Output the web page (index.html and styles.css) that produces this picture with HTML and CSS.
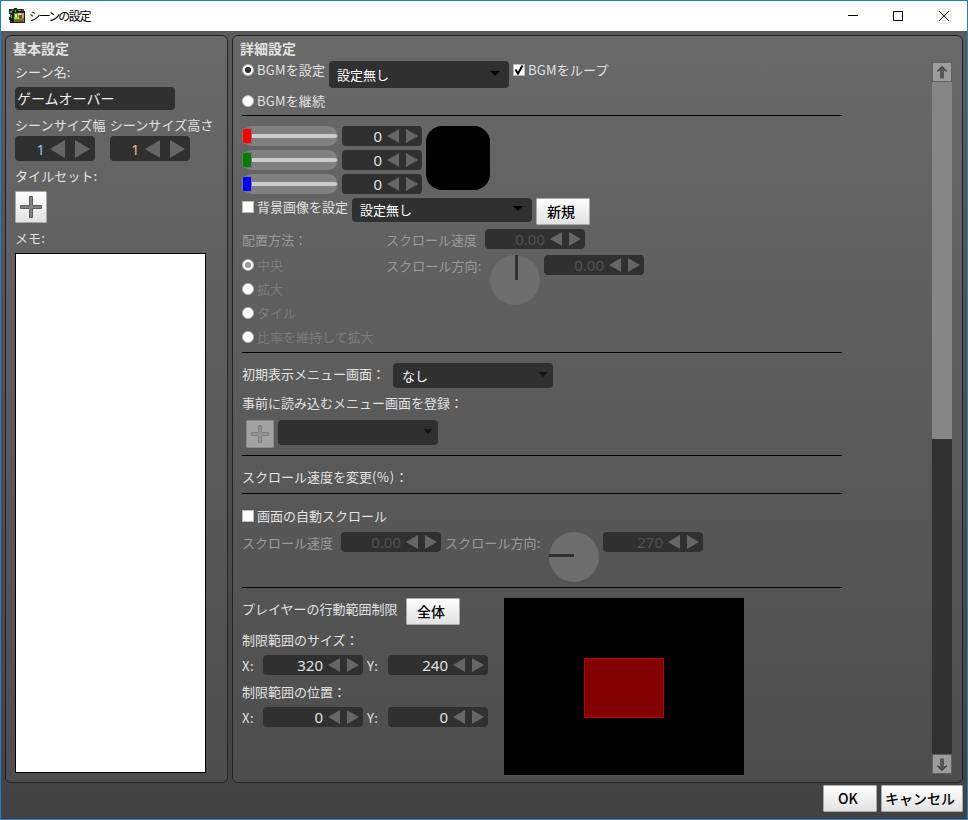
FILE: index.html
```
<!DOCTYPE html>
<html lang="ja">
<head>
    <meta charset="UTF-8">
    <title>シーンの設定</title>
    <link rel="stylesheet" href="styles.css">
</head>
<body>
    <div class="window">
        <header class="titlebar">
            <svg class="app-icon" width="16" height="16" viewBox="0 0 16 16">
                <rect x="1" y="1" width="14" height="14" fill="#3c5a34"/>
                <path d="M0 1h3v2h2V0h3v3h2V1h3v2h3v3H4v9H1v-3H0V9h2V6H0z" fill="#18251d"/>
                <path d="M1 3h2v2H1zM2 7h1v3H2zM6 2h1v2H6zM10 2h2v1h-2z" fill="#7d9a88"/>
                <rect x="4.500" y="4.500" width="11" height="10" fill="#3f9a2c" stroke="#17280f"/>
                <rect x="9" y="5" width="6" height="5" fill="#c98"/>
                <path d="M9 5h3v2H9zM6 6h2v3H6z" fill="#f0e090"/>
                <path d="M10 7h3v3h-3z" fill="#b03a20"/>
                <path d="M5 9h5v2H5z" fill="#8ce34c"/>
                <path d="M6 12h8v2H6z" fill="#a63c28"/>
            </svg>
            <span class="title">シーンの設定</span>
            <svg class="caption-buttons" width="104" height="12" viewBox="0 0 104 12">
                <path d="M0 5.500h10M45.500 1.500h9v9h-9zM91 1l10 10M101 1l-10 10" fill="none" stroke="#000"/>
            </svg>
        </header>

        <main class="panels">
            <section class="panel basic">
                <h2>基本設定</h2>
                <div class="label">シーン名:</div>
                <input type="text" class="name-input" value="ゲームオーバー">
                <div class="sizes">
                    <div class="size">
                        <div class="label">シーンサイズ幅</div>
                        <div class="spinner big blue"><span>1</span><i class="left"></i><i class="right"></i></div>
                    </div>
                    <div class="size">
                        <div class="label">シーンサイズ高さ</div>
                        <div class="spinner big orange"><span>1</span><i class="left"></i><i class="right"></i></div>
                    </div>
                </div>
                <div class="label tileset">タイルセット:</div>
                <button class="plus">
                    <svg width="22" height="22" viewBox="0 0 22 22"><path d="M9.500.5h3v9h9v3h-9v9h-3v-9h-9v-3h9z" fill="#808080" stroke="#5c5c5c"/></svg>
                </button>
                <div class="label memo-label">メモ:</div>
                <textarea class="memo"></textarea>
            </section>

            <section class="panel detail">
                <div class="content">
                    <h2>詳細設定</h2>
                    <div class="row bgm">
                        <span class="radio on"></span><span class="label bgm-label">BGMを設定</span>
                        <div class="select tall">設定無し</div>
                        <span class="check"><svg width="12" height="12" viewBox="0 0 12 12"><path d="M2.500 5.500L5 9.500L9.500 1.500" fill="none" stroke="#000" stroke-width="2"/></svg></span>
                        <span class="label latin">BGMをループ</span>
                    </div>
                    <div class="row bgm-keep"><span class="radio"></span><span class="label latin">BGMを継続</span></div>
                    <hr>

                    <div class="row color">
                        <div class="stack">
                            <div class="slider red"></div>
                            <div class="slider green"></div>
                            <div class="slider blue"></div>
                        </div>
                        <div class="stack">
                            <div class="spinner small"><span>0</span><i class="left"></i><i class="right"></i></div>
                            <div class="spinner small"><span>0</span><i class="left"></i><i class="right"></i></div>
                            <div class="spinner small"><span>0</span><i class="left"></i><i class="right"></i></div>
                        </div>
                        <div class="swatch"></div>
                    </div>
                    <div class="row background">
                        <span class="check"></span><span class="label bg-label">背景画像を設定</span>
                        <div class="select">設定無し</div>
                        <button class="btn">新規</button>
                    </div>
                    <div class="row placement disabled">
                        <div class="methods">
                            <div class="label">配置方法：</div>
                            <div class="option"><span class="radio on"></span><span class="label">中央</span></div>
                            <div class="option"><span class="radio"></span><span class="label">拡大</span></div>
                            <div class="option"><span class="radio"></span><span class="label">タイル</span></div>
                            <div class="option"><span class="radio"></span><span class="label">比率を維持して拡大</span></div>
                        </div>
                        <div class="scroll">
                            <div class="row speed">
                                <span class="label speed-label">スクロール速度</span>
                                <div class="spinner"><span>0.00</span><i class="left"></i><i class="right"></i></div>
                            </div>
                            <div class="row direction">
                                <span class="label dir-label">スクロール方向:</span>
                                <div class="dial up"></div>
                                <div class="spinner"><span>0.00</span><i class="left"></i><i class="right"></i></div>
                            </div>
                        </div>
                    </div>
                    <hr>

                    <div class="row menu">
                        <span class="label menu-label">初期表示メニュー画面：</span>
                        <div class="select narrow dim">なし</div>
                    </div>
                    <div class="label preload">事前に読み込むメニュー画面を登録：</div>
                    <div class="row register">
                        <button class="plus off">
                            <svg width="18" height="18" viewBox="0 0 18 18"><path d="M7.500.5h3v7h7v3h-7v7h-3v-7h-7v-3h7z" fill="#949494" stroke="#7c7c7c"/></svg>
                        </button>
                        <div class="select narrow dim"></div>
                    </div>
                    <hr>

                    <div class="label rate">スクロール速度を変更<span class="percent">(%)</span>：</div>
                    <hr>

                    <div class="row auto"><span class="check"></span><span class="label">画面の自動スクロール</span></div>
                    <div class="row auto-scroll disabled">
                        <span class="label speed-label">スクロール速度</span>
                        <div class="spinner"><span>0.00</span><i class="left"></i><i class="right"></i></div>
                        <span class="label dir-label">スクロール方向:</span>
                        <div class="dial side"></div>
                        <div class="spinner"><span>270</span><i class="left"></i><i class="right"></i></div>
                    </div>
                    <hr>

                    <div class="row limit">
                        <div class="limit-form">
                            <div class="row limit-head">
                                <span class="label">プレイヤーの行動範囲制限</span>
                                <button class="btn">全体</button>
                            </div>
                            <div class="label">制限範囲のサイズ：</div>
                            <div class="row pair">
                                <span class="label axis">X:</span>
                                <div class="spinner"><span>320</span><i class="left"></i><i class="right"></i></div>
                                <span class="label axis">Y:</span>
                                <div class="spinner"><span>240</span><i class="left"></i><i class="right"></i></div>
                            </div>
                            <div class="label">制限範囲の位置：</div>
                            <div class="row pair">
                                <span class="label axis">X:</span>
                                <div class="spinner"><span>0</span><i class="left"></i><i class="right"></i></div>
                                <span class="label axis">Y:</span>
                                <div class="spinner"><span>0</span><i class="left"></i><i class="right"></i></div>
                            </div>
                        </div>
                        <div class="preview"><div class="range"></div></div>
                    </div>
                </div>
                <div class="scrollbar">
                    <div class="arrow"><svg width="10" height="13" viewBox="0 0 10 13"><path d="M5 .5L9.500 5H7v7.500H3V5H.5z" fill="#585858"/><path d="M.5 5.500V5L5 .5L9.500 5v.5" fill="none" stroke="#222"/></svg></div>
                    <div class="thumb"></div>
                    <div class="track"></div>
                    <div class="arrow"><svg width="10" height="13" viewBox="0 0 10 13"><path d="M5 12.500L9.500 8H7V.5H3V8H.5z" fill="#585858"/><path d="M.5 7.500V8L5 12.500L9.500 8v-.5" fill="none" stroke="#222"/></svg></div>
                </div>
            </section>
        </main>

        <footer class="actions">
            <button class="btn">OK</button>
            <button class="btn wide">キャンセル</button>
        </footer>
    </div>
</body>
</html>
```
FILE: styles.css
```
* {
    box-sizing: border-box;
}

body {
    margin: 0;
    font-family: "Noto Sans CJK JP", "Noto Sans", sans-serif;
    font-size: 13px;
    line-height: 20px;
    color: #e2e2e2;
}

.window {
    width: 968px;
    height: 820px;
    border: 1px solid #1c80d2;
    background: linear-gradient(#5b5b5b, #424242);
    overflow: hidden;
}

.titlebar {
    display: flex;
    align-items: center;
    height: 30px;
    padding: 0 15px 0 8px;
    background: #fff;
    color: #000;
}

.title {
    margin-left: 4px;
    padding-bottom: 1px;
    font-size: 12px;
    letter-spacing: -1.2px;
    font-feature-settings: "palt";
}

.caption-buttons {
    margin-left: auto;
}

.panels {
    display: flex;
    gap: 4px;
    padding: 4px;
}

.panel {
    height: 748px;
    border: 1px solid #222;
    border-radius: 6px;
    background: linear-gradient(#696969, #4d4d4d);
}

h2 {
    margin: 0;
    height: 24px;
    font-size: 14px;
    line-height: 24px;
}

.label {
    flex-shrink: 0;
    height: 20px;
    white-space: nowrap;
}

/* 基本設定 */
.basic {
    width: 223px;
    padding: 0 0 0 9px;
}

.basic h2 {
    margin-left: -2px;
}

.basic .label {
    margin-top: 2px;
    letter-spacing: 0.1px;
}

.name-input {
    display: block;
    width: 160px;
    height: 23px;
    margin-top: 5px;
    padding: 0 2px 2px;
    border: none;
    border-radius: 4px;
    background: #303030;
    color: #eee;
    font-family: inherit;
    font-size: 14px;
}

.sizes {
    display: flex;
    gap: 4px;
    margin-top: 3px;
}

.basic .tileset {
    margin-top: 5px;
}

.basic .memo-label {
    margin-top: 5px;
}

.memo {
    display: block;
    width: 191px;
    height: 520px;
    margin-top: 5px;
    border: 1px solid #000;
    background: #fff;
    resize: none;
}

/* 部品 */
.row {
    display: flex;
    align-items: flex-start;
}

hr {
    width: 600px;
    height: 1px;
    margin: 0;
    border: none;
    background: #000;
}

.latin {
    letter-spacing: 0.2px;
}

.spinner {
    display: flex;
    flex-shrink: 0;
    align-items: center;
    width: 100px;
    height: 20px;
    padding-right: 4px;
    border-radius: 4px;
    background: #303030;
    font-family: "Noto Sans", sans-serif;
    font-size: 15px;
}

.spinner span {
    flex: 1;
    text-align: right;
}

.spinner i {
    border: 7px solid transparent;
}

.spinner .left {
    margin-left: 5px;
    border-left: none;
    border-right: 12px solid #666;
}

.spinner .right {
    margin-left: 7px;
    border-right: none;
    border-left: 12px solid #666;
}

.spinner.small {
    width: 80px;
}

.spinner.big {
    width: 80px;
    height: 25px;
    margin-top: 1px;
    padding-right: 5px;
}

.spinner.big span {
    padding-top: 1px;
}

.spinner.big i {
    border-top-width: 9px;
    border-bottom-width: 9px;
}

.spinner.big .left {
    margin-left: 5px;
    border-right-width: 15px;
}

.spinner.big .right {
    margin-left: 10px;
    border-left-width: 15px;
}

.spinner.blue {
    color: #8ac4f0;
}

.spinner.orange {
    color: #e8b483;
}

.radio,
.check {
    flex-shrink: 0;
    width: 12px;
    height: 12px;
    margin: 4px 3px 0 0;
    background: #fff;
    border: 1px solid #bbb;
}

.radio {
    border-radius: 50%;
}

.radio.on {
    background: radial-gradient(circle, #333 0 2.8px, #fff 3.4px);
}

.check svg {
    display: block;
    margin: -1px;
}

.select {
    display: flex;
    flex-shrink: 0;
    align-items: center;
    justify-content: space-between;
    width: 180px;
    height: 24px;
    padding: 0 9px 1px 8px;
    border-radius: 4px;
    background: #303030;
    color: #fff;
}

.select::after {
    content: "";
    margin: -2px 0 0 auto;
    border: 5px solid transparent;
    border-top: 5px solid #000;
    border-bottom: none;
}

.select.tall {
    height: 27px;
    padding-bottom: 0;
}

.select.narrow {
    width: 160px;
    height: 25px;
    padding: 0 5px 0 9px;
}

.select.dim::after {
    border-top-color: #151515;
}

.btn,
.plus {
    display: flex;
    flex-shrink: 0;
    align-items: center;
    justify-content: center;
    padding: 0;
    border: 1px solid #aaa;
    border-radius: 1px;
    background: linear-gradient(#fefefe, #e2e2e2);
    color: #000;
}

.btn {
    width: 54px;
    height: 27px;
    padding: 0 4px 2px 0;
    font-family: inherit;
    font-size: 14px;
    font-weight: 500;
}

.btn.wide {
    width: 82px;
}

.plus {
    width: 32px;
    height: 32px;
    margin-top: 5px;
}

.plus.off {
    width: 28px;
    height: 28px;
    margin: 0 4px 0 4px;
    border-color: #888;
    background: #a2a2a2;
}

.dial {
    display: flex;
    flex-shrink: 0;
    width: 50px;
    height: 50px;
    border-radius: 50%;
    background: #6e6e6e;
}

.dial::before {
    content: "";
    background: #303030;
}

.dial.up::before {
    width: 3px;
    height: 25px;
    margin-left: 25px;
}

.dial.side::before {
    width: 25px;
    height: 3px;
    margin-top: 22px;
}

/* 詳細設定 */
.detail {
    display: flex;
    justify-content: space-between;
    width: 731px;
    padding: 0 10px 0 9px;
}

.detail h2 {
    margin-left: -2px;
}

.bgm {
    height: 30px;
}

.bgm-label {
    width: 72px;
    letter-spacing: 0.2px;
}

.bgm .select {
    margin: 1px 4px 0 0;
}

.bgm-keep {
    height: 25px;
    padding-top: 1px;
}

.color {
    gap: 4px;
    height: 82px;
    padding-top: 10px;
}

.stack {
    display: flex;
    flex-direction: column;
    gap: 4px;
}

.slider {
    display: flex;
    align-items: center;
    width: 96px;
    height: 20px;
    padding: 0 1px;
    border-radius: 10px;
    background: #808080;
}

.slider::before {
    content: "";
    width: 8px;
    height: 14px;
    border-radius: 1px;
    background: #f00;
    box-shadow: 0 0 0 1px #777;
}

.slider.green::before {
    background: #008000;
}

.slider.blue::before {
    background: #00f;
}

.slider::after {
    content: "";
    flex: 1;
    height: 4px;
    margin-left: 1px;
    border-radius: 0 2px 2px 0;
    background: #ccc;
}

.swatch {
    width: 64px;
    height: 64px;
    border-radius: 16px;
    background: #000;
}

.background {
    height: 31px;
}

.background .check {
    margin-top: 3px;
}

.bg-label {
    width: 95px;
    margin-top: -1px;
}

.background .btn {
    margin-left: 4px;
}

.placement {
    height: 123px;
}

.methods {
    width: 144px;
}

.methods > .label {
    margin: 1px 0 5px;
}

.option {
    display: flex;
    height: 24px;
}

.disabled .label {
    color: #9a9a9a;
}

.disabled .option .label {
    color: #7b7b7b;
}

.disabled .radio.on {
    background: radial-gradient(circle, #999 0 2.8px, #fff 3.4px);
}

.disabled .spinner span {
    color: #505050;
}

.disabled .row .label {
    margin-top: 1px;
}

.speed-label {
    width: 99px;
}

.dir-label {
    width: 104px;
    letter-spacing: 0.1px;
}

.speed {
    height: 20px;
}

.direction {
    margin-top: 6px;
}

.dial + .spinner {
    margin-left: 4px;
}

.menu {
    padding-top: 10px;
}

.menu-label {
    width: 151px;
    margin-top: 1px;
}

.preload {
    margin: 5px 0 7px;
}

.register {
    height: 35px;
}

.rate {
    height: 37px;
    padding-top: 11px;
}

.percent {
    letter-spacing: 0.7px;
}

.auto {
    height: 38px;
    padding-top: 12px;
}

.auto-scroll {
    height: 55px;
}

.auto-scroll .label {
    margin-top: 1px;
}

.auto-scroll .dir-label {
    margin-left: 4px;
    width: 104px;
}

.limit {
    padding-top: 10px;
}

.limit-form {
    width: 262px;
}

.limit-head {
    height: 32px;
}

.limit-head .label {
    width: 164px;
    margin-top: 1px;
}

.pair {
    height: 32px;
    padding-top: 5px;
}

.axis {
    width: 21px;
    margin-top: 1px;
    letter-spacing: 0.6px;
}

.pair .spinner + .axis {
    margin-left: 4px;
}

.preview {
    display: flex;
    align-items: center;
    justify-content: center;
    width: 240px;
    height: 177px;
    padding-top: 3px;
    background: #000;
}

.range {
    width: 80px;
    height: 60px;
    border: 1px solid #c00000;
    background: #800000;
}

.scrollbar {
    display: flex;
    flex-direction: column;
    width: 20px;
    height: 712px;
    margin-top: 26px;
}

.arrow {
    display: flex;
    align-items: center;
    justify-content: center;
    height: 20px;
    border: 1px solid #606060;
    background: #9c9c9c;
}

.thumb {
    height: 357px;
    background: #868686;
}

.track {
    flex: 1;
    background: #323232;
}

.actions {
    display: flex;
    justify-content: flex-end;
    gap: 4px;
    padding: 0 4px;
    margin-top: -2px;
}
```
